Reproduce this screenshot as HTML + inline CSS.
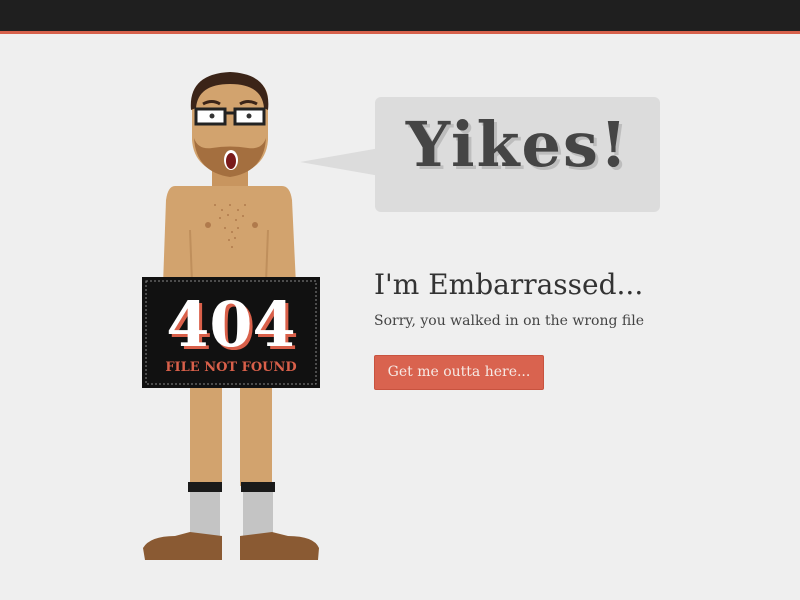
<!DOCTYPE html>
<html><head><meta charset="utf-8"><style>
body{margin:0;width:800px;height:600px;overflow:hidden;background:#efefef;font-family:"DejaVu Serif","Liberation Serif",serif;position:relative}
.top{position:absolute;left:0;top:0;width:800px;height:31px;background:#1f1f1f;border-bottom:3px solid #d6604b}
.bub{position:absolute;left:375px;top:97px;width:285px;height:115px;background:#dcdcdc;border-radius:6px}
.yk{position:absolute;left:375px;top:108px;width:285px;text-align:center;font-size:62px;font-weight:bold;color:#454545;text-shadow:3px 3px 0 #bdbdbd;letter-spacing:2px}
.h1{position:absolute;left:374px;top:268px;font-size:28px;color:#333;white-space:nowrap}
.s{position:absolute;left:374px;top:313px;font-size:14px;color:#444;white-space:nowrap}
.btn{position:absolute;left:374px;top:355px;width:170px;height:35px;background:#d9634f;border-radius:2px;border:1px solid #c8533f;box-sizing:border-box;color:#f6e9e4;font-size:14px;text-align:center;line-height:33px}
</style></head><body>
<div class="top"></div>
<svg width="800" height="600" style="position:absolute;left:0;top:0">
<polygon points="300,162 380,148 380,176" fill="#dcdcdc"/>
<rect x="212" y="160" width="36" height="32" fill="#c8955f"/>
<path d="M175,186 Q168,186 166,200 L163,285 L296,285 L292,200 Q290,186 282,186 Z" fill="#d2a36e"/>
<path d="M190,230 L192,282 M268,230 L266,282" stroke="#bf8f5c" stroke-width="2"/>
<g fill="#b07a4c">
<circle cx="208" cy="225" r="3"/><circle cx="255" cy="225" r="3"/>
<circle cx="215" cy="205" r="1"/><circle cx="222" cy="210" r="1"/><circle cx="230" cy="205" r="1"/><circle cx="238" cy="210" r="1"/><circle cx="245" cy="205" r="1"/><circle cx="220" cy="218" r="1"/><circle cx="228" cy="215" r="1"/><circle cx="236" cy="220" r="1"/><circle cx="243" cy="216" r="1"/><circle cx="225" cy="228" r="1"/><circle cx="232" cy="232" r="1"/><circle cx="238" cy="228" r="1"/><circle cx="229" cy="240" r="1"/><circle cx="235" cy="238" r="1"/><circle cx="232" cy="247" r="1"/>
</g>
<path d="M192,100 Q192,76 230,74 Q268,76 268,100 L268,140 Q266,170 230,176 Q194,170 192,140 Z" fill="#d2a36e"/>
<path d="M194,138 Q196,172 230,177 Q264,172 266,138 Q262,150 248,148 Q230,145 212,148 Q198,150 194,138 Z" fill="#a46f3f"/>
<path d="M191,110 Q188,74 230,72 Q272,74 268,110 L264,108 Q262,84 230,84 Q198,84 196,108 Z" fill="#3b2418"/>
<rect x="196" y="109" width="29" height="15" fill="#fff" stroke="#222" stroke-width="3"/>
<rect x="235" y="109" width="29" height="15" fill="#fff" stroke="#222" stroke-width="3"/>
<line x1="225" y1="113" x2="235" y2="113" stroke="#222" stroke-width="3"/>
<circle cx="212" cy="116" r="2.5" fill="#333"/><circle cx="249" cy="116" r="2.5" fill="#333"/>
<path d="M203,104 Q212,99 220,104 M240,104 Q248,99 257,104" stroke="#3b2418" stroke-width="3" fill="none"/>
<ellipse cx="231" cy="160" rx="7" ry="10" fill="#fff"/><ellipse cx="231" cy="161" rx="5" ry="8" fill="#7a1b1b"/>
<rect x="190" y="386" width="32" height="100" fill="#d2a36e"/>
<rect x="240" y="386" width="32" height="100" fill="#d2a36e"/>
<rect x="188" y="482" width="34" height="10" fill="#1a1a1a"/>
<rect x="241" y="482" width="34" height="10" fill="#1a1a1a"/>
<rect x="190" y="492" width="30" height="48" fill="#c4c4c4"/>
<rect x="243" y="492" width="30" height="48" fill="#c4c4c4"/>
<path d="M143,548 Q150,536 175,536 L190,532 L222,536 L222,560 L145,560 Z" fill="#8a5a33"/>
<path d="M240,536 L272,532 L288,536 Q314,536 319,548 L318,560 L240,560 Z" fill="#8a5a33"/>
<rect x="142" y="277" width="178" height="111" fill="#111"/>
<rect x="146" y="281" width="170" height="103" fill="none" stroke="#888" stroke-width="1" stroke-dasharray="2,2"/>
<text x="234" y="349" text-anchor="middle" font-family="DejaVu Serif" font-weight="bold" font-size="62" fill="#d9604a">404</text>
<text x="231" y="346" text-anchor="middle" font-family="DejaVu Serif" font-weight="bold" font-size="62" fill="#fff">404</text>
<text x="231" y="371" text-anchor="middle" font-family="DejaVu Serif" font-weight="bold" font-size="13" fill="#d9604a">FILE NOT FOUND</text>
</svg>
<div class="bub"></div>
<div class="yk">Yikes!</div>
<div class="h1">I'm Embarrassed...</div>
<div class="s">Sorry, you walked in on the wrong file</div>
<div class="btn">Get me outta here...</div>
</body></html>
